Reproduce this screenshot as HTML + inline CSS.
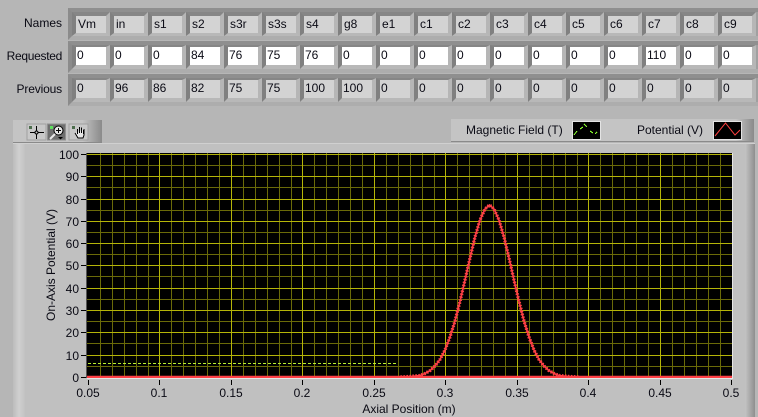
<!DOCTYPE html>
<html><head><meta charset="utf-8"><style>
html,body{margin:0;padding:0}
body{width:758px;height:417px;overflow:hidden;background:#b6b6b6;position:relative;font:12px "Liberation Sans",sans-serif;color:#0a0a14}
.lb{position:absolute;right:696px;white-space:nowrap;line-height:14px}
.row{position:absolute;left:68px;width:690px;height:32px;box-sizing:border-box;border:4px solid;border-color:#8f8f8f #a4a4a4 #adadad #8b8b8b;border-right:0;background:#a0a0a0;display:flex}
.row div{box-sizing:border-box;width:38px;height:24px;flex:none;border-style:solid;border-width:2px 4px 4px 4px;border-color:#868686 #b6b6b6 #b8b8b8 #808080;background:#d3d3d3;padding-left:2px;line-height:17px;white-space:nowrap;overflow:hidden}
.row.a div{border-top-width:4px;border-bottom-width:3px}
.row.w div{background:#fff;padding-left:1px}
.row.p div{padding-left:1px}
.abs{position:absolute}
</style></head><body>
<div class="lb" style="top:16px">Names</div>
<div class="lb" style="top:49px;letter-spacing:-.3px">Requested</div>
<div class="lb" style="top:82px;letter-spacing:-.15px">Previous</div>
<div class="row a" style="top:8px"><div>Vm</div><div>in</div><div>s1</div><div>s2</div><div>s3r</div><div>s3s</div><div>s4</div><div>g8</div><div>e1</div><div>c1</div><div>c2</div><div>c3</div><div>c4</div><div>c5</div><div>c6</div><div>c7</div><div>c8</div><div>c9</div></div>
<div class="row w" style="top:41px"><div>0</div><div>0</div><div>0</div><div>84</div><div>76</div><div>75</div><div>76</div><div>0</div><div>0</div><div>0</div><div>0</div><div>0</div><div>0</div><div>0</div><div>0</div><div>110</div><div>0</div><div>0</div></div>
<div class="row p" style="top:74px"><div>0</div><div>96</div><div>86</div><div>82</div><div>75</div><div>75</div><div>100</div><div>100</div><div>0</div><div>0</div><div>0</div><div>0</div><div>0</div><div>0</div><div>0</div><div>0</div><div>0</div><div>0</div></div>

<div class="abs" style="left:13px;top:143px;width:742px;height:274px;background:#c0c0c0;border-top:1px solid #d0d0d0;box-sizing:border-box"></div>
<div class="abs" style="left:13px;top:144px;width:12px;height:273px;background:linear-gradient(90deg,#bcbcbc,#d0d0d0 50%,#c2c2c2)"></div>
<div class="abs" style="left:745px;top:144px;width:10px;height:273px;background:linear-gradient(90deg,#c4c4c4,#8e8e8e)"></div>
<div class="abs" style="left:13px;top:120px;width:89px;height:23px;background:linear-gradient(90deg,#c4c4c4,#c4c4c4 78%,#8a8a8a);border-bottom:1px solid #8a8a8a;box-sizing:border-box"></div>
<div class="abs" style="left:451px;top:119px;width:303px;height:23px;background:linear-gradient(90deg,#c4c4c4,#c4c4c4 94%,#8a8a8a);border-bottom:1px solid #8a8a8a;box-sizing:border-box"></div>

<svg class="abs" style="left:0;top:0" width="758" height="417" viewBox="0 0 758 417">
<!-- toolbar -->
<g>
<rect x="27" y="124" width="19" height="16" fill="#c8c8c8" stroke="#a0a0a0"/>
<rect x="47.500" y="124" width="18" height="16" fill="#6e6e6e" stroke="#909090"/>
<rect x="69" y="124" width="19" height="16" fill="#c8c8c8" stroke="#a0a0a0"/>
<rect x="29" y="126" width="3" height="3" fill="#4d6e4d"/>
<rect x="50" y="126" width="3" height="3" fill="#5fe05f"/>
<rect x="72" y="126" width="3" height="3" fill="#4d6e4d"/>
<path d="M30 132.500H44M36.500 126V139" stroke="#000" fill="none"/><circle cx="36.500" cy="132.500" r="1.500" fill="#c8c8c8" stroke="#000"/>
<circle cx="58.500" cy="130.500" r="4.500" fill="#e8e8e8" stroke="#000"/><path d="M56 130.500h5M58.500 128v5" stroke="#000"/><path d="M55 134l-5 5" stroke="#e8e8e8" stroke-width="2"/><path d="M58 137h5l-2.500 2.500z" fill="#000"/>
<path d="M75 133l3 5h5l1-3v-6M77.500 134v-5M79.500 133v-6M81.500 133v-5.500M83.500 134v-4" stroke="#000" fill="#e8e8e8" stroke-width="1"/>
</g>
<!-- legend -->
<rect x="572.500" y="121.500" width="28" height="18" fill="#000" stroke="#e4e4e4"/>
<path d="M574 135l3-4M580 129l3-2M584 124l3 3M590 131l3 2M595 134l2-2" stroke="#8cff30" fill="none" shape-rendering="crispEdges"/>
<rect x="713.500" y="121.500" width="28" height="18" fill="#000" stroke="#e4e4e4"/>
<path d="M715 136l10.500-13 9.500 12 5-5" stroke="#ff4040" fill="none"/>
<g font-family="Liberation Sans" font-size="12" fill="#0a0a14">
<text x="466" y="134">Magnetic Field (T)</text>
<text x="637" y="134">Potential (V)</text>
</g>
<!-- plot -->
<rect x="87" y="153" width="645" height="225" fill="#000"/>
<g shape-rendering="crispEdges">
<path stroke="#6a6a08" fill="none" d="M100.500 153V378M112.500 153V378M124.500 153V378M136.500 153V378M148.500 153V378M171.500 153V378M183.500 153V378M195.500 153V378M207.500 153V378M219.500 153V378M243.500 153V378M255.500 153V378M267.500 153V378M279.500 153V378M291.500 153V378M314.500 153V378M326.500 153V378M338.500 153V378M350.500 153V378M362.500 153V378M386.500 153V378M398.500 153V378M410.500 153V378M422.500 153V378M434.500 153V378M457.500 153V378M469.500 153V378M481.500 153V378M493.500 153V378M505.500 153V378M529.500 153V378M541.500 153V378M553.500 153V378M565.500 153V378M577.500 153V378M600.500 153V378M612.500 153V378M624.500 153V378M636.500 153V378M648.500 153V378M672.500 153V378M684.500 153V378M696.500 153V378M708.500 153V378M720.500 153V378M87 366.500H732M87 343.500H732M87 321.500H732M87 299.500H732M87 276.500H732M87 254.500H732M87 232.500H732M87 210.500H732M87 187.500H732M87 165.500H732"/>
<path stroke="#b4b408" fill="none" d="M159.500 153V378M231.500 153V378M302.500 153V378M374.500 153V378M445.500 153V378M517.500 153V378M588.500 153V378M660.500 153V378M87 355.500H732M87 332.500H732M87 310.500H732M87 288.500H732M87 265.500H732M87 243.500H732M87 221.500H732M87 199.500H732M87 176.500H732M87 154.500H732"/>
<path d="M88 363.500H397" stroke="#b8f030" stroke-dasharray="3 2" fill="none"/>
</g>
<path d="M400.500 377L410 376.500 420 375.500 425 373.500 430 370.600 435 366 440 359.500 445 350 450 337 455 321 460 301.400 465 280 470 258 475 237 480 220 485 209 489.500 205 494 209 499 220 504 237 509 258 514 280 519 301.400 524 321 529 337 534 350 539 359.500 544 366 549 370.600 554 373.500 559 375.500 569 376.500 579 377" fill="none" stroke="#ff4046" stroke-width="1.600"/>
<path d="M400.500 377L410 376.500 420 375.500 425 373.500 430 370.600 435 366 440 359.500 445 350 450 337 455 321 460 301.400 465 280 470 258 475 237 480 220 485 209 489.500 205 494 209 499 220 504 237 509 258 514 280 519 301.400 524 321 529 337 534 350 539 359.500 544 366 549 370.600 554 373.500 559 375.500 569 376.500 579 377" fill="none" stroke="#ff4046" stroke-width="3.400" stroke-dasharray="1.500 1.500"/>
<path d="M87 377H732" stroke="#ff4046" stroke-width="2.500"/>
<path d="M732.500 153V379M87 378.500H733" stroke="#e6e6e6" shape-rendering="crispEdges"/>
<path d="M86.500 153V378" stroke="#555" shape-rendering="crispEdges"/>
<!-- ticks -->
<path stroke="#000" fill="none" shape-rendering="crispEdges" d="M81 154.500H86M81 176.500H86M81 199.500H86M81 221.500H86M81 243.500H86M81 265.500H86M81 288.500H86M81 310.500H86M81 332.500H86M81 355.500H86M81 377.500H86M88.500 380V385M159.500 380V385M231.500 380V385M302.500 380V385M374.500 380V385M445.500 380V385M517.500 380V385M588.500 380V385M660.500 380V385M731.500 380V385"/>
<g font-family="Liberation Sans" font-size="12" fill="#0a0a14" text-anchor="end">
<text x="79" y="159">100</text><text x="79" y="181">90</text><text x="79" y="204">80</text><text x="79" y="226">70</text><text x="79" y="248">60</text><text x="79" y="270">50</text><text x="79" y="293">40</text><text x="79" y="315">30</text><text x="79" y="337">20</text><text x="79" y="360">10</text><text x="79" y="382">0</text>
</g>
<g font-family="Liberation Sans" font-size="12" fill="#0a0a14" text-anchor="middle">
<text x="88" y="397">0.05</text><text x="159" y="397">0.1</text><text x="231" y="397">0.15</text><text x="302" y="397">0.2</text><text x="374" y="397">0.25</text><text x="445" y="397">0.3</text><text x="517" y="397">0.35</text><text x="588" y="397">0.4</text><text x="660" y="397">0.45</text><text x="731" y="397">0.5</text>
<text x="409" y="413">Axial Position (m)</text>
<text transform="translate(55 265) rotate(-90)">On-Axis Potential (V)</text>
</g>
</svg>
</body></html>
